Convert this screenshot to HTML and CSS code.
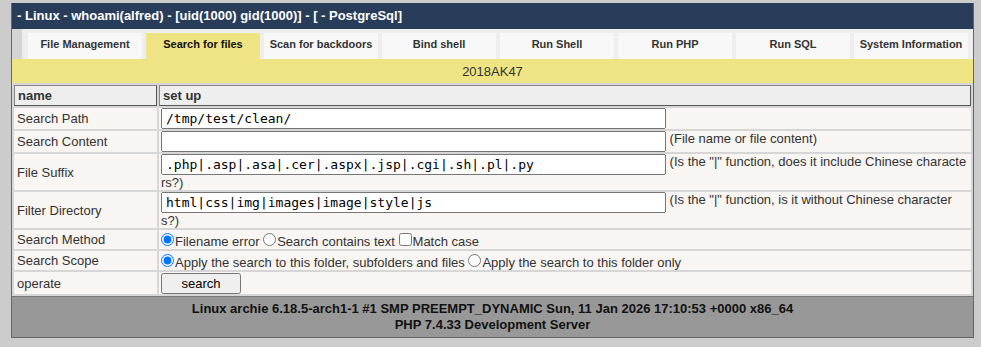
FILE: index.html
```html
<!DOCTYPE html>
<html lang="en">
<head>
    <meta charset="UTF-8">
    <title>Search for files</title>
    <link rel="stylesheet" href="styles.css">
</head>
<body>
<div class="shell">
    <div class="topbar">- Linux - whoami(alfred) - [uid(1000) gid(1000)] - [ - PostgreSql]</div>
    <ul class="menu">
        <li>File Management</li>
        <li class="on">Search for files</li>
        <li>Scan for backdoors</li>
        <li>Bind shell</li>
        <li>Run Shell</li>
        <li>Run PHP</li>
        <li>Run SQL</li>
        <li>System Information</li>
    </ul>
    <div class="motto">2018AK47</div>
    <table class="grid">
        <tr class="head">
            <td class="label">name</td>
            <td>set up</td>
        </tr>
        <tr>
            <td class="label">Search Path</td>
            <td><input type="text" class="field" value="/tmp/test/clean/"></td>
        </tr>
        <tr>
            <td class="label">Search Content</td>
            <td><input type="text" class="field" value=""> (File name or file content)</td>
        </tr>
        <tr>
            <td class="label">File Suffix</td>
            <td><input type="text" class="field" value=".php|.asp|.asa|.cer|.aspx|.jsp|.cgi|.sh|.pl|.py"> (Is the "|" function, does it include Chinese characters?)</td>
        </tr>
        <tr>
            <td class="label">Filter Directory</td>
            <td><input type="text" class="field" value="html|css|img|images|image|style|js"> (Is the "|" function, is it without Chinese characters?)</td>
        </tr>
        <tr>
            <td class="label">Search Method</td>
            <td><input type="radio" name="method" checked>Filename error <input type="radio" name="method">Search contains text <input type="checkbox">Match case</td>
        </tr>
        <tr>
            <td class="label">Search Scope</td>
            <td><input type="radio" name="scope" checked>Apply the search to this folder, subfolders and files <input type="radio" name="scope">Apply the search to this folder only</td>
        </tr>
        <tr>
            <td class="label">operate</td>
            <td><button class="go">search</button></td>
        </tr>
    </table>
    <div class="foot">
        Linux archie 6.18.5-arch1-1 #1 SMP PREEMPT_DYNAMIC Sun, 11 Jan 2026 17:10:53 +0000 x86_64<br>
        PHP 7.4.33 Development Server
    </div>
</div>
</body>
</html>
```

FILE: styles.css
```css
* {
    margin: 0;
    padding: 0;
}

body {
    background: #cccccc;
    padding: 3px 7px 0 11px;
    font-family: "Liberation Sans", Arial, sans-serif;
    font-size: 13px;
    color: #333;
}

.shell {
    border: 1px solid #666;
    border-top: 0;
    background: #eee;
}

.topbar {
    background: #293d5b;
    color: #fff;
    font-weight: bold;
    font-size: 13px;
    height: 26px;
    line-height: 25px;
    padding-left: 5px;
}

.menu {
    list-style: none;
    display: flex;
    gap: 4px;
    height: 30px;
    padding: 4px 0 0 6px;
    box-sizing: border-box;
    border-left: 10px solid #d4d4d4;
    background: #eee;
}

.menu li {
    width: 114px;
    height: 26px;
    line-height: 23px;
    text-align: center;
    background: #f8f8f8;
    font-size: 11px;
    font-weight: bold;
    color: #333;
}

.menu li.on {
    background: #eee484;
    color: #111;
}

.motto {
    background: #eee484;
    height: 24px;
    line-height: 26px;
    text-align: center;
    color: #333;
}

.grid {
    width: 100%;
    border-spacing: 2px;
    background: #d6d6d6;
}

.grid td {
    background: #f8f5f2;
    padding: 0 2px;
    line-height: 15px;
    vertical-align: middle;
    word-break: break-all;
}

.grid td.label {
    width: 143px;
    box-sizing: border-box;
    padding-left: 3px;
}

.grid tr.head td {
    background: #eee;
    font-weight: bold;
    border: 1px solid #888;
    border-right-color: #555;
    border-bottom-color: #555;
    height: 21px;
    box-sizing: border-box;
    padding: 0 3px;
}

.field {
    width: 505px;
    height: 21px;
    box-sizing: border-box;
    font-family: "DejaVu Sans Mono", monospace;
    font-size: 13px;
    padding: 0 3px;
    vertical-align: top;
}

input[type="radio"],
input[type="checkbox"] {
    margin: 3px 1px 0 0;
}

.go {
    width: 80px;
    height: 21px;
    margin-top: 1px;
    vertical-align: top;
    font-family: "Liberation Sans", Arial, sans-serif;
    font-size: 13px;
}

.foot {
    background: #989898;
    border-top: 1px solid #777;
    text-align: center;
    font-weight: bold;
    color: #111;
    line-height: 16px;
    padding: 4px 0 4px;
}
```
